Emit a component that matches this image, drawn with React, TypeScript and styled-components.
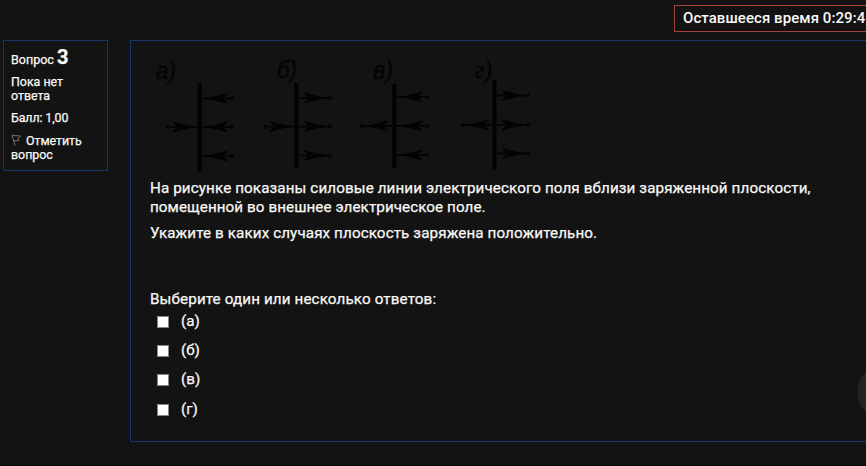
import React from "react";
import styled, { createGlobalStyle } from "styled-components";

const GlobalStyle = createGlobalStyle`
  * { box-sizing: border-box; }
  body {
    margin: 0;
    overflow: hidden;
    background: #131313;
    color: #faf9f6;
    font-family: Roboto, "Noto Sans", sans-serif;
  }
`;

const Page = styled.div`
  position: relative;
  height: 466px;
  overflow: hidden;
  border-bottom: 1px solid #0d0a0c;
`;

const TopBar = styled.header`
  display: flex;
  height: 40px;
  padding: 5px 0 0 674px;
`;

const Timer = styled.div`
  flex: none;
  width: 220px;
  height: 27px;
  padding-left: 8px;
  border: 1px solid #a5403a;
  font-size: 15px;
  font-weight: 500;
  line-height: 24px;
  letter-spacing: 0.07px;
  white-space: nowrap;
`;

const Question = styled.main`
  display: flex;
  align-items: flex-start;
  gap: 22px;
  padding-left: 3px;
`;

const Info = styled.aside`
  flex: none;
  width: 105px;
  height: 131px;
  padding: 5px 7px;
  border: 1px solid #16366a;
  font-size: 12.4px;
  font-weight: 400;
  line-height: 14px;
  -webkit-text-stroke: 0.25px currentColor;
`;

const QuestionTitle = styled.h3`
  height: 23px;
  margin: 0 0 6px;
  font-size: 12.5px;
  font-weight: 400;
  line-height: 23px;
  white-space: nowrap;
`;

const QuestionNumber = styled.span`
  font-size: 20px;
  font-weight: 700;
`;

const InfoText = styled.div`
  margin-bottom: 8px;

  &:last-child {
    margin-top: 9px;
  }
`;

const InfoLine = styled.span<{ $spacing?: number }>`
  display: block;
  letter-spacing: ${(p) => p.$spacing ?? 0}px;
  white-space: nowrap;
`;

const FlagIcon = styled.svg`
  width: 11px;
  height: 12px;
  margin-right: 4px;
  vertical-align: -1px;
`;

const Content = styled.section`
  flex: none;
  width: 760px;
  height: 402px;
  padding: 9px 19px;
  border: 1px solid #16366a;
  font-size: 15.2px;
  font-weight: 400;
  -webkit-text-stroke: 0.25px currentColor;
`;

const Figure = styled.svg`
  display: block;
  width: 400px;
  height: 129px;
  -webkit-text-stroke: 0;
`;

const Paragraph = styled.p`
  margin: 0 0 7px;
  line-height: 19px;
`;

const Line = styled.span<{ $spacing: number }>`
  display: block;
  width: max-content;
  letter-spacing: ${(p) => p.$spacing}px;
  white-space: nowrap;
`;

const Prompt = styled.div`
  margin-top: 47px;
  line-height: 19px;
`;

const Answers = styled.div`
  display: grid;
  grid-auto-rows: 29.2px;
  padding: 3px 0 0 7px;
`;

const Answer = styled.label`
  display: flex;
  align-items: flex-start;
  gap: 12px;
  line-height: 19px;
`;

const Checkbox = styled.input`
  appearance: none;
  width: 12px;
  height: 12px;
  margin: 4px 0 0;
  border: 1px solid #85858a;
  background: #fff;
`;

const ChatButton = styled.button`
  position: absolute;
  top: 367px;
  left: 857px;
  width: 50px;
  height: 50px;
  padding: 0;
  border: 0;
  border-radius: 50%;
  background: #232323;
`;

type ArrowData = { from: number; to: number; tip: number; dir: 1 | -1; y: number };

function Arrow({ from, to, tip, dir, y }: ArrowData) {
  const back = tip - dir * 21;
  const notch = tip - dir * 16;
  return (
    <g>
      <path d={`M${from} ${y}H${to}`} stroke="#050505" strokeWidth="2" />
      <path
        d={`M${tip} ${y}Q${notch + dir * 6} ${y - 2} ${back} ${y - 5}L${notch} ${y}L${back} ${y + 5}Q${notch + dir * 6} ${y + 2} ${tip} ${y}Z`}
        fill="#030303"
        stroke="#030303"
        strokeWidth="0.7"
      />
    </g>
  );
}

const diagrams = [
  { label: "а)", size: 23, lx: 156, ly: 79, x: 199.7, top: 83, bottom: 172, rows: [98.5, 127, 156], end: 233, start: 166, right: -1, left: 1 },
  { label: "б)", size: 23, lx: 277, ly: 78, x: 296.5, top: 83, bottom: 168, rows: [98, 126.5, 155.5], end: 331, start: 264, right: 1, left: 1 },
  { label: "в)", size: 25, lx: 373, ly: 79, x: 394.3, top: 84, bottom: 168, rows: [97, 126, 155], end: 428, start: 361, right: -1, left: -1 },
  { label: "г)", size: 25, lx: 475, ly: 78, x: 494.5, top: 80, bottom: 170, rows: [95.5, 125, 153.5], end: 529, start: 462, right: 1, left: -1 },
] as const;

function FieldFigure() {
  return (
    <Figure viewBox="150 50 400 129">
      {diagrams.map((d) => (
        <g key={d.label}>
          <text
            x={d.lx}
            y={d.ly}
            fill="#050505"
            stroke="#050505"
            strokeWidth="0.5"
            fontFamily={d.label === "г)" ? '"Liberation Serif", serif' : '"Liberation Sans", sans-serif'}
            fontStyle="italic"
            fontSize={d.size}
            textLength={d.label === "г)" ? 17 : 20}
            lengthAdjust="spacingAndGlyphs"
          >
            {d.label}
          </text>
          <path d={`M${d.x} ${d.top}V${d.bottom}`} stroke="#020202" strokeWidth="4" />
          {d.rows.map((y) => (
            <g key={y}>
              <Arrow from={d.x} to={d.end} y={y} dir={d.right} tip={d.right === 1 ? d.end - 6 : d.x + 7} />
              <circle cx={d.end - 1} cy={y} r="2" fill="#050505" />
            </g>
          ))}
          <Arrow from={d.start} to={d.x} y={d.rows[1]} dir={d.left} tip={d.left === 1 ? d.x - 6 : d.start + 6} />
          <circle cx={d.start + 1} cy={d.rows[1]} r="2" fill="#050505" />
        </g>
      ))}
    </Figure>
  );
}

export default function App() {
  return (
    <>
      <GlobalStyle />
      <Page>
        <TopBar>
          <Timer>Оставшееся время 0:29:4</Timer>
        </TopBar>
        <Question>
          <Info>
            <QuestionTitle>
              Вопрос <QuestionNumber>3</QuestionNumber>
            </QuestionTitle>
            <InfoText>
              <InfoLine>Пока нет</InfoLine>
              <InfoLine>ответа</InfoLine>
            </InfoText>
            <InfoText>
              <InfoLine $spacing={-0.1}>Балл: 1,00</InfoLine>
            </InfoText>
            <InfoText>
              <InfoLine $spacing={-0.05}>
                <FlagIcon viewBox="0 0 11 12" fill="none" stroke="#77736e">
                  <path d="M1 1.5L4 11.5M1 1.5L9.5 2L7 4.5L8 6.5L3 7" />
                </FlagIcon>
                Отметить
              </InfoLine>
              <InfoLine>вопрос</InfoLine>
            </InfoText>
          </Info>
          <Content>
            <FieldFigure />
            <Paragraph>
              <Line $spacing={0.11}>На рисунке показаны силовые линии электрического поля вблизи заряженной плоскости,</Line>
              <Line $spacing={0.08}>помещенной во внешнее электрическое поле.</Line>
            </Paragraph>
            <Paragraph>
              <Line $spacing={0.11}>Укажите в каких случаях плоскость заряжена положительно.</Line>
            </Paragraph>
            <Prompt>
              <Line $spacing={0.13}>Выберите один или несколько ответов:</Line>
            </Prompt>
            <Answers>
              {["(а)", "(б)", "(в)", "(г)"].map((answer) => (
                <Answer key={answer}>
                  <Checkbox type="checkbox" />
                  {answer}
                </Answer>
              ))}
            </Answers>
          </Content>
        </Question>
        <ChatButton aria-label="Чат" />
      </Page>
    </>
  );
}
